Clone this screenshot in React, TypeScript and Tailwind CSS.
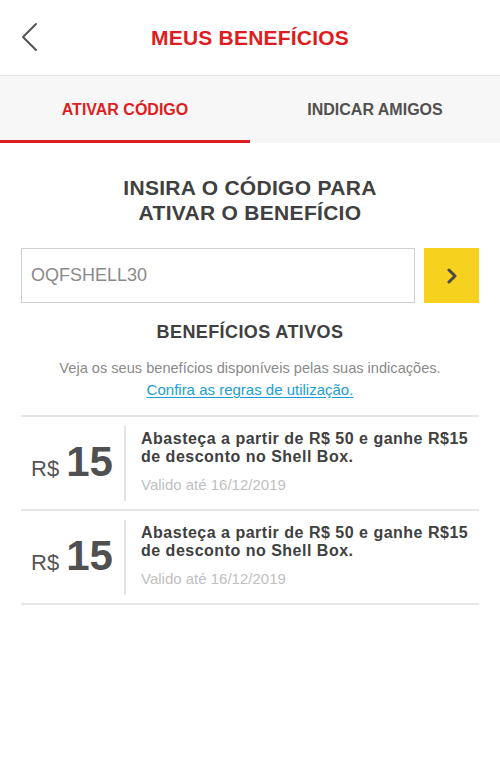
import { useState } from "react";

const beneficios = [
  {
    valor: "15",
    descricao: "Abasteça a partir de R$ 50 e ganhe R$15 de desconto no Shell Box.",
    validade: "Valido até 16/12/2019",
  },
  {
    valor: "15",
    descricao: "Abasteça a partir de R$ 50 e ganhe R$15 de desconto no Shell Box.",
    validade: "Valido até 16/12/2019",
  },
];

export default function App() {
  const [tab, setTab] = useState(0);
  const [codigo, setCodigo] = useState("");

  return (
    <div className="min-h-[784px] w-[500px] bg-white font-['Liberation_Sans',sans-serif] text-[#404040]">
      {/* Header */}
      <header className="relative flex h-[76px] items-center justify-center border-b border-[#e6e6e6]">
        <button className="absolute left-[20px] top-[22px] p-0">
          <svg width="20" height="30" viewBox="0 0 20 30" fill="none">
            <path d="M16 2 L3 15 L16 28" stroke="#555" strokeWidth="2" strokeLinecap="round" strokeLinejoin="round" />
          </svg>
        </button>
        <h1 className="text-[21px] font-bold tracking-[0.2px] text-[#dd1d21]">MEUS BENEFÍCIOS</h1>
      </header>

      {/* Tabs */}
      <nav className="flex h-[67px] bg-[#f7f7f7]">
        {["ATIVAR CÓDIGO", "INDICAR AMIGOS"].map((label, i) => (
          <button
            key={label}
            onClick={() => setTab(i)}
            className={`flex flex-1 items-center justify-center border-b-[3px] pt-[3px] text-[16px] font-bold ${
              tab === i ? "border-[#dd1d21] text-[#dd1d21]" : "border-transparent text-[#505050]"
            }`}
          >
            {label}
          </button>
        ))}
      </nav>

      {/* Ativar código */}
      <section className="px-[21px] pt-[32px]">
        <h2 className="text-center text-[21px] font-bold leading-[25px] tracking-[0.3px] text-[#404040]">
          INSIRA O CÓDIGO PARA
          <br />
          ATIVAR O BENEFÍCIO
        </h2>

        <div className="mt-[23px] flex gap-[9px]">
          <input
            value={codigo}
            onChange={(e) => setCodigo(e.target.value)}
            placeholder="OQFSHELL30"
            className="h-[55px] flex-1 border border-[#cfcfcf] px-[9px] text-[18px] text-[#555] outline-none placeholder:text-[#8a8a8a]"
          />
          <button className="flex h-[55px] w-[55px] items-center justify-center bg-[#f6d11e]">
            <svg width="12" height="16" viewBox="0 0 12 16" fill="none">
              <path d="M3 2 L9 8 L3 14" stroke="#4a4a4a" strokeWidth="3" strokeLinecap="round" strokeLinejoin="round" />
            </svg>
          </button>
        </div>

        <h3 className="mt-[16px] text-center text-[18px] font-bold leading-[27px] tracking-[0.4px] text-[#404040]">
          BENEFÍCIOS ATIVOS
        </h3>
        <p className="mt-[12px] text-center text-[14.6px] leading-[20px] text-[#8a8a8a]">
          Veja os seus benefícios disponíveis pelas suas indicações.
        </p>
        <p className="mt-[2px] text-center leading-[20px]">
          <a href="#" className="text-[15px] text-[#1a9ed6] underline underline-offset-2">
            Confira as regras de utilização.
          </a>
        </p>

        {/* Lista */}
        <ul className="mt-[15px] border-t-2 border-[#e6e6e6]">
          {beneficios.map((b, i) => (
            <li key={i} className="flex h-[94px] items-center border-b-2 border-[#e6e6e6]">
              <div className="flex w-[103px] items-baseline pl-[10px]">
                <span className="text-[22px] text-[#555]">R$</span>
                <span className="ml-[7px] text-[42px] font-bold leading-none text-[#505050]">{b.valor}</span>
              </div>
              <div className="h-[75px] w-[2px] bg-[#e3e3e3]" />
              <div className="flex-1 pl-[15px]">
                <p className="text-[16px] font-bold leading-[18px] tracking-[0.5px] text-[#404040]">{b.descricao}</p>
                <p className="mt-[8px] text-[15px] text-[#c0c0c0]">{b.validade}</p>
              </div>
            </li>
          ))}
        </ul>
      </section>
    </div>
  );
}
